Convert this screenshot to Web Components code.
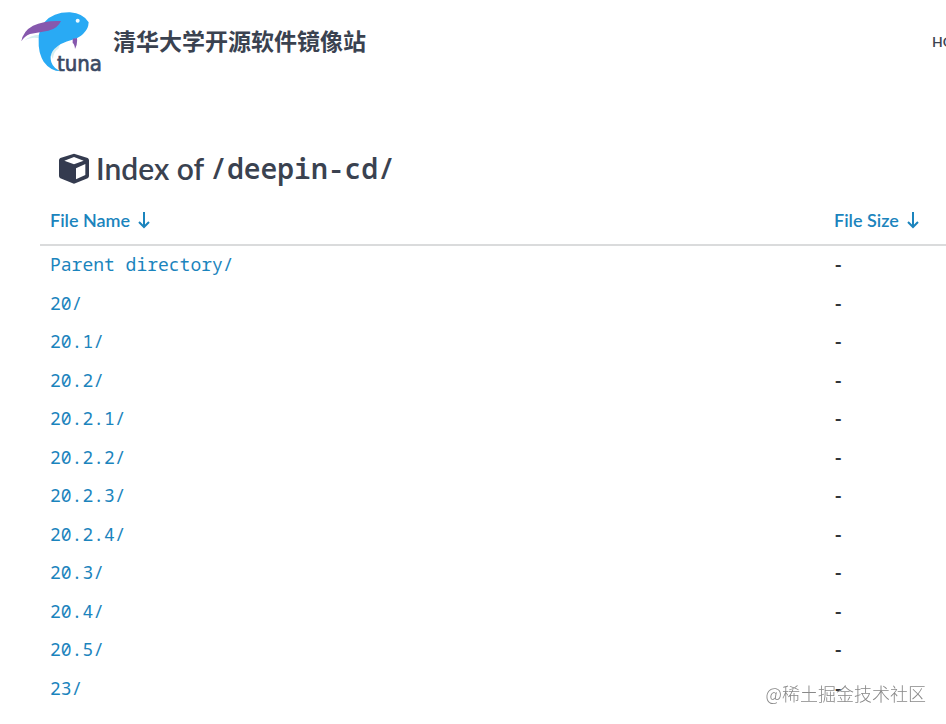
<!DOCTYPE html>
<html lang="zh-CN">
<head>
<meta charset="utf-8">
<meta name="viewport" content="width=device-width, initial-scale=1">
<title>Index of /deepin-cd/ | 清华大学开源软件镜像站</title>
<style>
    :root {
        --text: #3a4250;
        --link: #1b84bd;
        --line: #dadbdc;
        --mono: "Noto Sans Mono", "DejaVu Sans Mono", monospace;
    }

    body {
        margin: 0;
        background: #fff;
        color: var(--text);
        font-family: Lato, "Noto Sans CJK SC", sans-serif;
        overflow: hidden;
    }
</style>
</head>
<body>
<site-header>
    <tuna-logo slot="logo"></tuna-logo>
    <span slot="title">清华大学开源软件镜像站</span>
    <a slot="nav" href="#home">HOME</a>
</site-header>
<main>
    <index-heading path="/deepin-cd/">Index of</index-heading>
    <file-list></file-list>
</main>
<water-mark>@稀土掘金技术社区</water-mark>

<script>
class TunaLogo extends HTMLElement {
    constructor() {
        super();
        this.attachShadow({ mode: 'open' }).innerHTML = `
            <style>
                :host { display: block; width: 84px; height: 66px; }
                svg { display: block; width: 100%; height: 100%; }
                text { font: 66px "Liberation Sans Narrow", "DejaVu Sans Condensed", sans-serif; fill: #3b4963; stroke: #3b4963; stroke-width: 2; }
            </style>
            <svg viewBox="30 30 252 198" role="img" aria-label="tuna">
                <path fill="#d5eef0" d="M43 124Q61 109 88 107L92 119Q65 112 43 124ZM123 169Q130 146 150 137L145 149Q130 158 129 180Z"/>
                <path fill="#29aaf4" d="M104 69Q130 39 180 40Q220 43 236 70Q236 92 213 110Q201 119 187 122Q151 131 133 150Q117 168 124 190Q130 208 153 217Q121 216 101 188Q84 160 86 122Q85 92 104 69Z"/>
                <path fill="#8658ad" d="M34 127Q39 96 69 80Q102 64 153 66Q143 89 115 95Q83 101 60 105Q43 112 34 127ZM188 119L201 117Q203 138 195 150Q194 136 188 132Z"/>
                <circle cx="203" cy="65" r="6" fill="#eefaff"/>
                <text x="141" y="217">tuna</text>
            </svg>
        `;
    }
}

class SiteHeader extends HTMLElement {
    constructor() {
        super();
        this.attachShadow({ mode: 'open' }).innerHTML = `
            <style>
                :host { display: block; }
                header {
                    display: flex;
                    align-items: center;
                    height: 84px;
                    padding-left: 20px;
                }
                h1 {
                    flex: 1;
                    margin: 0 0 2px 9px;
                    font-size: 23px;
                    line-height: 32px;
                    font-weight: 700;
                }
                nav { width: 14px; margin-bottom: 2px; overflow: hidden; }
                ::slotted(a) {
                    color: var(--text);
                    font-size: 14px;
                    line-height: 20px;
                    font-weight: 600;
                    text-decoration: none;
                }
            </style>
            <header>
                <slot name="logo"></slot>
                <h1><slot name="title"></slot></h1>
                <nav><slot name="nav"></slot></nav>
            </header>
        `;
    }
}

class IndexHeading extends HTMLElement {
    constructor() {
        super();
        this.attachShadow({ mode: 'open' });
    }

    connectedCallback() {
        this.shadowRoot.innerHTML = `
            <style>
                :host { display: block; padding: 64px 0 0 58px; }
                h2 {
                    display: flex;
                    align-items: center;
                    gap: 6px;
                    margin: 0;
                    font-size: 30px;
                    line-height: 40px;
                    font-weight: 600;
                }
                svg { width: 32px; height: 32px; }
                code { font: 600 28px/40px var(--mono); }
            </style>
            <h2>
                <svg viewBox="0 0 96 96" aria-hidden="true">
                    <path fill="#343b4f" fill-rule="evenodd" d="M48 5L89 18Q93 20 93 25V72Q93 76 89 79L52 94Q48 96 44 94L7 79Q3 76 3 72V25Q3 20 7 18ZM48 15L19 26L48 37L77 26ZM54 49V82L82 69V36Z"/>
                </svg>
                <slot></slot>
                <code>${this.getAttribute('path')}</code>
            </h2>
        `;
    }
}

class FileList extends HTMLElement {
    constructor() {
        super();
        this.attachShadow({ mode: 'open' });
    }

    get names() {
        return ['Parent directory/', '20/', '20.1/', '20.2/', '20.2.1/', '20.2.2/',
            '20.2.3/', '20.2.4/', '20.3/', '20.4/', '20.5/', '23/'];
    }

    connectedCallback() {
        const arrow = `<svg viewBox="0 0 12 18" aria-hidden="true"><path d="M6 1V16M1 11L6 16L11 11"/></svg>`;
        this.shadowRoot.innerHTML = `
            <style>
                :host { display: block; padding: 12px 0 0 40px; }
                table {
                    width: 100%;
                    table-layout: fixed;
                    border-collapse: separate;
                    border-spacing: 0;
                }
                th, td { padding: 0 10px; text-align: left; }
                th {
                    height: 46px;
                    padding-bottom: 4px;
                    box-sizing: border-box;
                    border-bottom: 2px solid var(--line);
                    font-size: 18px;
                    line-height: 24px;
                    font-weight: 600;
                    white-space: nowrap;
                }
                th:last-child { width: 122px; }
                th a { display: flex; align-items: center; gap: 8px; }
                th svg {
                    width: 12px;
                    height: 18px;
                    fill: none;
                    stroke: currentColor;
                    stroke-width: 2;
                }
                td { height: 36px; padding-bottom: 2px; line-height: 24px; font-size: 18px; }
                tr:nth-child(even) td { height: 37px; }
                td:first-child { font-family: var(--mono); }
                td:last-child { padding-left: 11px; color: #30343a; font: 600 20px/24px "Open Sans", sans-serif; }
                th:last-child, td:last-child { padding-right: 0; }
                a { color: var(--link); text-decoration: none; }
            </style>
            <table>
                <thead>
                    <tr>
                        <th><a href="#name">File Name ${arrow}</a></th>
                        <th><a href="#size">File Size ${arrow}</a></th>
                    </tr>
                </thead>
                <tbody>
                    ${this.names.map(name => `<tr><td><a href="#${encodeURIComponent(name)}">${name}</a></td><td>-</td></tr>`).join('')}
                </tbody>
            </table>
        `;
    }
}

class WaterMark extends HTMLElement {
    constructor() {
        super();
        this.attachShadow({ mode: 'open' }).innerHTML = `
            <style>
                :host {
                    position: fixed;
                    right: 20px;
                    bottom: 18px;
                    color: #888;
                    font: 300 18px/26px "Noto Sans CJK SC", sans-serif;
                    pointer-events: none;
                }
            </style>
            <slot></slot>
        `;
    }
}

customElements.define('tuna-logo', TunaLogo);
customElements.define('site-header', SiteHeader);
customElements.define('index-heading', IndexHeading);
customElements.define('file-list', FileList);
customElements.define('water-mark', WaterMark);
</script>
</body>
</html>
